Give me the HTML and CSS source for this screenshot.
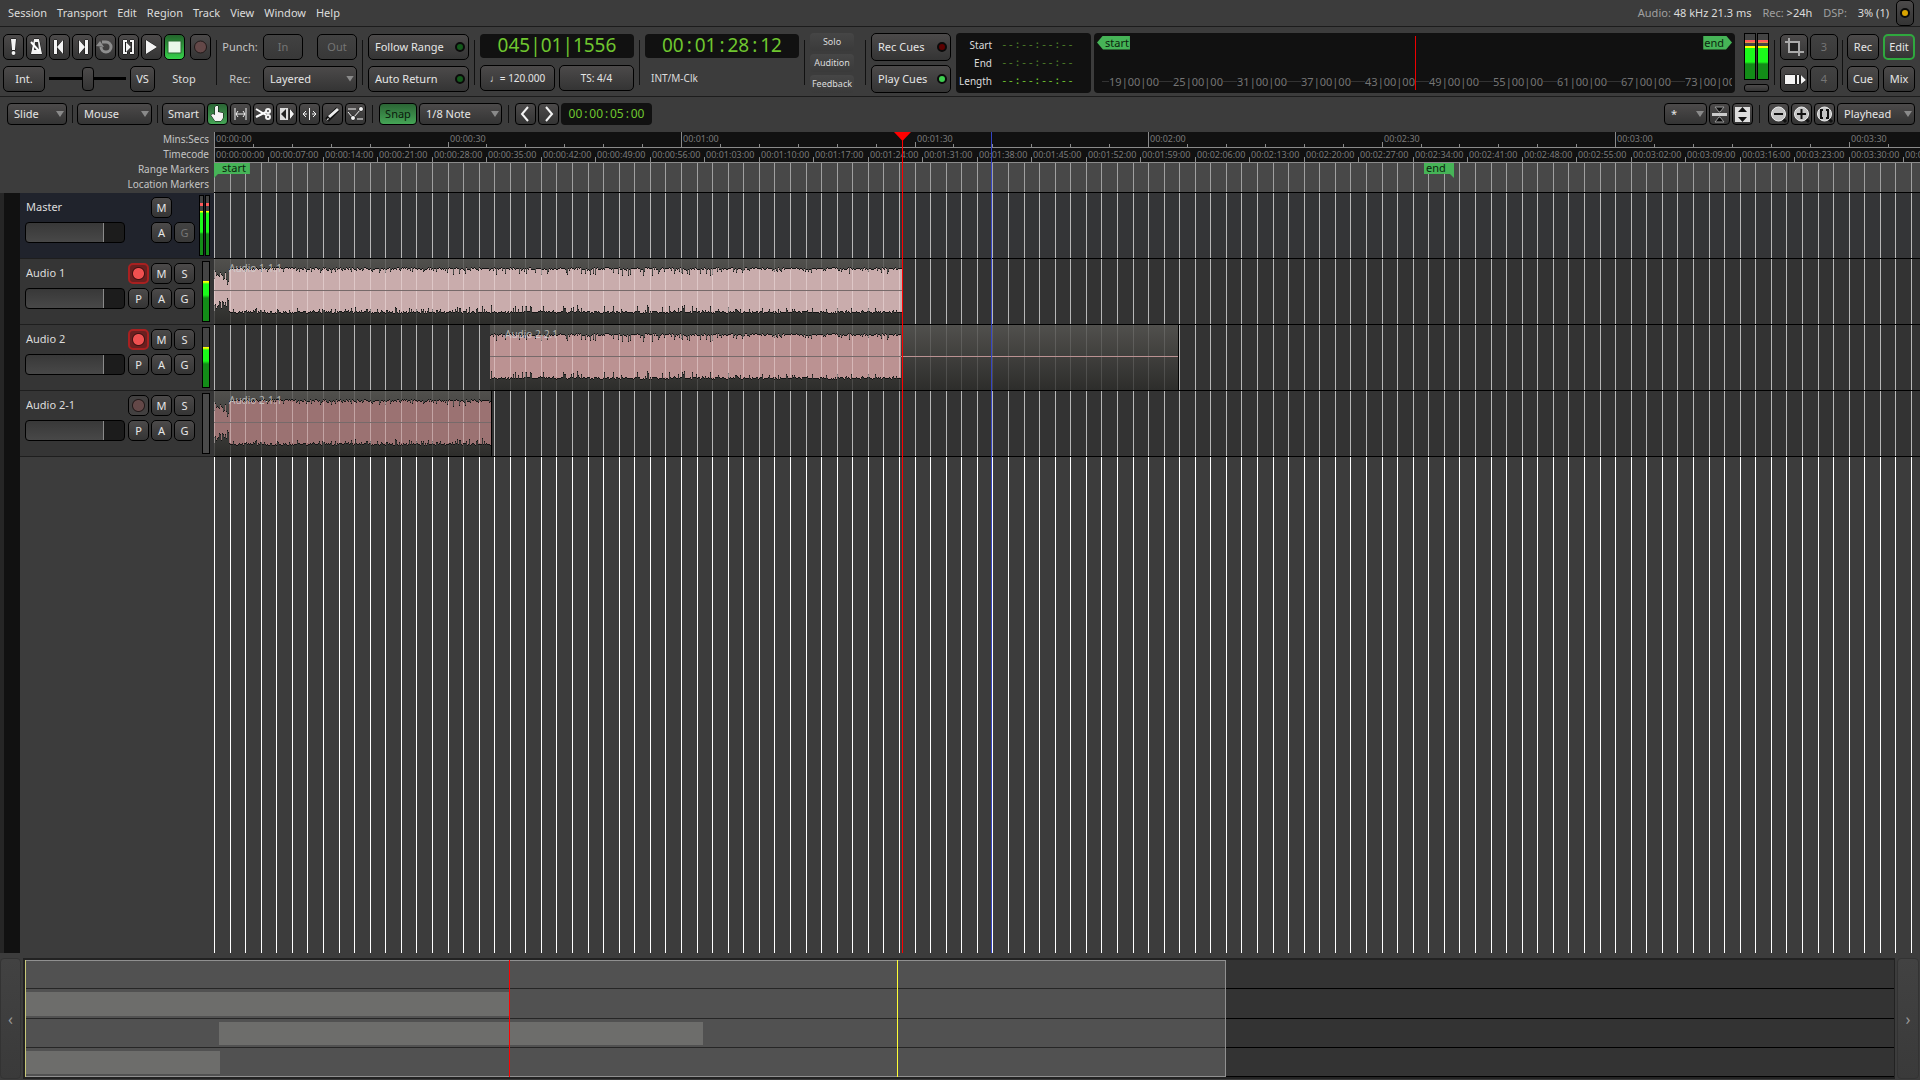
FILE: index.html
```html
<!DOCTYPE html>
<html lang="en">
<head>
<meta charset="utf-8">
<title>Session editor</title>
<link rel="stylesheet" href="styles.css">
</head>
<body>
<header class="menubar">
  <nav class="menus">
    <a href="#session">Session</a><a href="#transport">Transport</a><a href="#edit">Edit</a><a href="#region">Region</a><a href="#track">Track</a><a href="#view">View</a><a href="#window">Window</a><a href="#help">Help</a>
  </nav>
  <div class="status">
    <span><i>Audio:</i> 48 kHz 21.3 ms</span>
    <span><i>Rec:</i> &gt;24h</span>
    <span class="dsp"><i>DSP:</i> 3% (1)</span>
    <button class="btn error-log" aria-label="Log"><b class="led amber"></b></button>
  </div>
</header>

<section class="transport">
  <div class="stack">
    <div class="row">
      <button class="btn ico" aria-label="Panic"><svg viewBox="0 0 21 26"><path d="M8 5h5l-1 11H9z" class="w"/><circle cx="10.500" cy="19" r="2" class="w"/></svg></button>
      <button class="btn ico" aria-label="Metronome"><svg viewBox="0 0 21 26"><path d="M8 5h5l3 15H5z" class="w"/><path d="M9 8l-1 8h5l-1-8z" fill="#333"/><path d="M5 8l8 9" stroke="#fff" stroke-width="2"/></svg></button>
      <button class="btn ico" aria-label="Go to start"><svg viewBox="0 0 21 26"><path d="M5 6h3v14H5zM14 6v14l-6-7z" class="w"/></svg></button>
      <button class="btn ico" aria-label="Go to end"><svg viewBox="0 0 21 26"><path d="M13 6h3v14h-3zM7 6v14l6-7z" class="w"/></svg></button>
      <button class="btn ico" aria-label="Loop"><svg viewBox="0 0 21 26"><path d="M6 13a5 5 0 1 0 5-5H7" fill="none" stroke="#8e8e8e" stroke-width="3"/><path d="M1 12l4-5 4 6z" fill="#8e8e8e"/></svg></button>
      <button class="btn ico" aria-label="Play range"><svg viewBox="0 0 21 26"><path d="M5 6h4v2H7v10h2v2H5zM16 6h-4v2h2v10h-2v2h4zM8 8v10l5-5z" class="w"/></svg></button>
      <button class="btn ico" aria-label="Play"><svg viewBox="0 0 21 26"><path d="M5 6l11 7-11 7z" class="w"/></svg></button>
      <button class="btn ico stop-on" aria-label="Stop"><svg viewBox="0 0 21 26"><path d="M4 7h13v12H4z" fill="#e9f8e9" stroke="#2a6a32"/></svg></button>
      <button class="btn ico rec" aria-label="Record"><svg viewBox="0 0 21 26"><circle cx="10.500" cy="13" r="6" fill="#644848" stroke="#201818"/></svg></button>
    </div>
    <div class="row">
      <button class="btn int">Int.</button>
      <input class="shuttle" type="range" min="0" max="100" value="50" aria-label="Shuttle">
      <button class="btn vs">VS</button>
      <span class="stopped">Stop</span>
    </div>
  </div>
  <hr>
  <div class="punch">
    <span>Punch:</span><div class="row spread"><button class="btn off in">In</button><button class="btn off in">Out</button></div>
    <label for="recmode">Rec:</label>
    <span class="drop"><select id="recmode"><option>Layered</option></select></span>
  </div>
  <hr>
  <div class="stack opts">
    <button class="btn ledbtn">Follow Range<b class="led dim"></b></button>
    <button class="btn ledbtn">Auto Return<b class="led dim"></b></button>
  </div>
  <hr>
  <div class="stack clockbox">
    <div class="clock">045|01|1556</div>
    <div class="row"><button class="btn sm">♩= 120.000</button><button class="btn sm">TS: 4/4</button></div>
  </div>
  <hr>
  <div class="stack clockbox">
    <div class="clock">00<s>:</s>01<s>:</s>28<s>:</s>12</div>
    <div class="sync">INT/M-Clk</div>
  </div>
  <hr>
  <div class="stack tiny">
    <button>Solo</button><button>Audition</button><button>Feedback</button>
  </div>
  <hr>
  <div class="stack cues">
    <button class="btn ledbtn">Rec Cues<b class="led red"></b></button>
    <button class="btn ledbtn">Play Cues<b class="led green"></b></button>
  </div>
  <dl class="range">
    <dt>Start</dt><dd class="faded">--:--:--:--</dd>
    <dt>End</dt><dd class="faded">--:--:--:--</dd>
    <dt>Length</dt><dd>--:--:--:--</dd>
  </dl>
  <div class="minimap">
    <div class="flags"><span class="mflag left">start</span><span class="mflag right">end</span></div>
    <div class="bars"><span>19|00|00</span><span>25|00|00</span><span>31|00|00</span><span>37|00|00</span><span>43|00|00</span><span>49|00|00</span><span>55|00|00</span><span>61|00|00</span><span>67|00|00</span><span>73|00|00</span></div>
    <div class="minihead"></div>
  </div>
  <div class="master-meter">
    <div class="row"><i></i><i></i></div>
    <button class="btn" aria-label="Reset peak"></button>
  </div>
  <hr>
  <div class="quad views">
    <button class="btn" aria-label="Crop"><svg viewBox="0 0 28 26"><path d="M9 8h10v10H9z" fill="#222"/><path d="M5 8h14v14M9 4v14h15" fill="none" stroke="#aaa" stroke-width="2"/></svg></button>
    <button class="btn off">3</button>
    <button class="btn" aria-label="Blocks"><svg viewBox="0 0 28 26"><path d="M5 9h10v9H5zM17 9h2v9h-2zM21 9l5 5-5 4z" class="w"/></svg></button>
    <button class="btn off">4</button>
  </div>
  <hr>
  <div class="quad pages">
    <button class="btn">Rec</button><button class="btn current">Edit</button>
    <button class="btn">Cue</button><button class="btn">Mix</button>
  </div>
</section>

<section class="tools">
  <span class="drop d60"><select aria-label="Edit mode"><option>Slide</option></select></span>
  <hr>
  <span class="drop d75"><select aria-label="Edit point"><option>Mouse</option></select></span>
  <hr>
  <div class="row">
    <button class="btn smart">Smart</button>
    <button class="btn ico tool-on" aria-label="Grab"><svg viewBox="0 0 21 22"><path d="M9 3h2v6l5 1v5l-2 3H8l-4-6 2-1 2 1V4z" class="w"/></svg></button>
    <button class="btn ico" aria-label="Range"><svg viewBox="0 0 21 22"><path d="M5 5v12M16 5v12M6 11h9M8 8l-2 3 2 3M13 8l2 3-2 3" class="l"/></svg></button>
    <button class="btn ico" aria-label="Cut"><svg viewBox="0 0 21 22"><path d="M3 6l10 6M3 14l10-5" stroke="#fff" stroke-width="2"/><circle cx="15" cy="8" r="2" class="l t"/><circle cx="15" cy="14" r="2" class="l t"/></svg></button>
    <button class="btn ico" aria-label="Audition"><svg viewBox="0 0 21 22"><path d="M4 5h8v12H4z" fill="#ddd"/><path d="M5 11l5-5v10z" fill="#222"/><path d="M14 6l4 5-4 5z" class="w"/></svg></button>
    <button class="btn ico" aria-label="Stretch"><svg viewBox="0 0 21 22"><path d="M10.500 5v12M4 11h4M13 11h4M7 8l-3 3 3 3M14 8l3 3-3 3" class="l"/></svg></button>
    <button class="btn ico" aria-label="Draw"><svg viewBox="0 0 21 22"><path d="M5 17L16 6" stroke="#111" stroke-width="5"/><path d="M7 14L16 6" stroke="#eee" stroke-width="3"/><path d="M4 18l2-3 1 1z" class="w"/></svg></button>
    <button class="btn ico" aria-label="Internal edit"><svg viewBox="0 0 21 22"><path d="M3 6h8M3 9l5 6 8-9M12 16h6" class="l"/><circle cx="8" cy="15" r="2" class="w"/><circle cx="16" cy="6" r="2" class="w"/></svg></button>
  </div>
  <hr>
  <div class="row">
    <button class="btn snap">Snap</button>
    <span class="drop d83"><select aria-label="Grid"><option>1/8 Note</option></select></span>
  </div>
  <hr>
  <div class="row">
    <button class="btn ico" aria-label="Nudge back"><svg viewBox="0 0 21 22"><path d="M13 4l-6 7 6 7" class="l t"/></svg></button>
    <button class="btn ico" aria-label="Nudge forward"><svg viewBox="0 0 21 22"><path d="M8 4l6 7-6 7" class="l t"/></svg></button>
    <div class="clock nudge">00<s>:</s>00<s>:</s>05<s>:</s>00</div>
  </div>
  <div class="row tail">
    <span class="drop d43"><select aria-label="Visible tracks"><option>*</option></select></span>
    <button class="btn ico" aria-label="Shrink tracks"><svg viewBox="0 0 21 22"><path d="M3 10h15v3H3z" fill="#ccc"/><path d="M6 4h9l-4 5h-1zM6 19h9l-4-5h-1z" fill="#0a0a0a" stroke="#999"/></svg></button>
    <button class="btn ico" aria-label="Expand tracks"><svg viewBox="0 0 21 22"><path d="M3 4h15v15H3z" fill="#ddd"/><path d="M6 9l4.500-5L15 9zM6 14l4.500 5 4.500-5z" fill="#111"/></svg></button>
  </div>
  <hr>
  <div class="row">
    <button class="btn ico" aria-label="Zoom out"><svg viewBox="0 0 21 22"><path d="M14 15l4 4" stroke="#111" stroke-width="3"/><circle cx="10.500" cy="11" r="7" class="lens"/><path d="M6 11h9" stroke="#111" stroke-width="2"/></svg></button>
    <button class="btn ico" aria-label="Zoom in"><svg viewBox="0 0 21 22"><path d="M14 15l4 4" stroke="#111" stroke-width="3"/><circle cx="10.500" cy="11" r="7" class="lens"/><path d="M6 11h9M10.500 6v10" stroke="#111" stroke-width="2"/></svg></button>
    <button class="btn ico" aria-label="Zoom to session"><svg viewBox="0 0 21 22"><path d="M14 15l4 4" stroke="#111" stroke-width="3"/><circle cx="10.500" cy="11" r="7" class="lens"/><path d="M9 7H7v8h2M12 7h2v8h-2" fill="none" stroke="#111" stroke-width="2"/></svg></button>
    <span class="drop d78"><select aria-label="Zoom focus"><option>Playhead</option></select></span>
  </div>
</section>

<main class="editor">
  <div class="rulernames"><span>Mins:Secs</span><span>Timecode</span><span>Range Markers</span><span>Location Markers</span></div>
  <div class="rulers">
    <div class="ruler" id="minsecs"></div>
    <div class="ruler" id="timecode"></div>
    <div class="markers"><svg class="grid" id="marker-grid"></svg>
      <span class="flag start">start</span><span class="flag end" id="endflag">end</span></div>
  </div>

  <div class="headers">
    <div class="track master">
      <div class="name">Master</div>
      <div class="keys"><button class="btn key c2">M</button></div>
      <div class="fader"></div>
      <div class="keys"><button class="btn key c2">A</button><button class="btn key off">G</button></div>
      <div class="meter"><i></i><i></i></div>
    </div>
    <div class="track">
      <div class="name">Audio 1</div>
      <div class="keys"><button class="btn key armed" aria-label="Record arm"></button><button class="btn key">M</button><button class="btn key">S</button></div>
      <div class="fader"></div>
      <div class="keys"><button class="btn key">P</button><button class="btn key">A</button><button class="btn key">G</button></div>
      <div class="meter"><i></i></div>
    </div>
    <div class="track">
      <div class="name">Audio 2</div>
      <div class="keys"><button class="btn key armed" aria-label="Record arm"></button><button class="btn key">M</button><button class="btn key">S</button></div>
      <div class="fader"></div>
      <div class="keys"><button class="btn key">P</button><button class="btn key">A</button><button class="btn key">G</button></div>
      <div class="meter"><i></i></div>
    </div>
    <div class="track">
      <div class="name">Audio 2-1</div>
      <div class="keys"><button class="btn key unarmed" aria-label="Record arm"></button><button class="btn key">M</button><button class="btn key">S</button></div>
      <div class="fader"></div>
      <div class="keys"><button class="btn key">P</button><button class="btn key">A</button><button class="btn key">G</button></div>
      <div class="meter silent"><i></i></div>
    </div>
  </div>

  <div class="lanes">
    <svg class="grid" id="lane-grid"></svg>
    <div class="lane"></div>
    <div class="lane" id="lane1"></div>
    <div class="lane" id="lane2"></div>
    <div class="lane" id="lane3"></div>
  </div>
  <div class="overlay"><div class="playhead" id="playhead"><svg width="17" height="9"><path d="M0 0h17L8.500 9z" fill="#f00"/></svg></div><div class="mouse" id="mouse"></div></div>
</main>

<footer class="summary">
  <button class="scroll" aria-label="Scroll left">‹</button>
  <div class="overview" id="overview">
    <div></div><div></div><div></div><div></div>
    <b class="window" id="window"></b>
  </div>
  <button class="scroll" aria-label="Scroll right">›</button>
</footer>
<script src="app.js"></script>
</body>
</html>
```
FILE: styles.css
```css
* { box-sizing: border-box; }
body { margin: 0; height: 100vh; display: flex; flex-direction: column; overflow: hidden; background: #3c3c3c; color: #dcdcdc; font: 11px/14px "Noto Sans", sans-serif; }
button, select { font: inherit; color: inherit; padding: 0; margin: 0; }
i { font-style: normal; }
s { text-decoration: none; display: inline-block; width: 11px; text-align: center; }
a { color: inherit; text-decoration: none; }
.row { display: flex; gap: 2px; }
.stack { display: flex; flex-direction: column; gap: 6px; }

.menubar { height: 27px; flex: none; display: flex; justify-content: space-between; align-items: center; border-bottom: 1px solid #1c1c1c; padding: 0 6px 0 8px; }
.menus { display: flex; gap: 10px; }
.status { display: flex; align-items: center; gap: 11px; }
.status i { color: #a0a0a0; }
.dsp i { margin-right: 8px; }
.error-log { width: 18px; height: 22px; margin-left: -4px; }

.btn { border: 1px solid #000; border-radius: 5px; background: linear-gradient(#4c4a4a, #343434); color: #e6e6e6; height: 26px; display: flex; align-items: center; justify-content: center; white-space: nowrap; }
.btn svg { display: block; flex: none; }
.ico { width: 21px; }
.ico svg { width: 21px; }
.w { fill: #f4f4f4; stroke: #111; stroke-width: 1; paint-order: stroke; }
.l { fill: none; stroke: #f4f4f4; stroke-width: 1; }
.l.t { stroke-width: 2; }
.lens { fill: #c4c4c4; stroke: #eee; }
.off { color: #757575; background: linear-gradient(#424242, #383838); }
.led { width: 10px; height: 10px; border-radius: 50%; border: 2px solid #0a0a0a; background: #135a1b; flex: none; }
.led.amber { background: #d9a400; }
.led.red { background: #5c0000; }
.led.green { background: #3fd050; }

hr { border: 0; margin: 0 5px; width: 1px; background: #111; height: 45px; flex: none; }
.transport { flex: none; height: 70px; display: flex; align-items: center; padding: 2px 5px 0 3px; border-bottom: 1px solid #1c1c1c; }
.stop-on { background: linear-gradient(#23642c, #37d24b); }
.rec { margin-left: 3px; }
.int { width: 42px; }
.vs { width: 25px; }
.stopped { width: 54px; text-align: center; align-self: center; }
.shuttle { appearance: none; width: 77px; height: 26px; margin: 0 2px; background: linear-gradient(#000, #000) center / 100% 3px no-repeat; }
.shuttle::-webkit-slider-thumb { appearance: none; width: 12px; height: 24px; border: 1px solid #000; border-radius: 4px; background: linear-gradient(#4c4a4a, #343434); }
.punch { display: grid; grid-template-columns: 36px 94px; gap: 6px 5px; align-items: center; text-align: center; color: #c4c4c4; }
.spread { justify-content: space-between; }
.in { width: 40px; }
.drop { position: relative; display: block; }
.drop select { appearance: none; width: 100%; height: 26px; padding: 0 6px; border: 1px solid #000; border-radius: 5px; background: linear-gradient(#4c4a4a, #343434); color: #e6e6e6; }
.drop::after { content: ""; position: absolute; right: 3px; top: 50%; margin-top: -3px; width: 8px; height: 6px; background: #8a8a8a; clip-path: polygon(0 0, 100% 0, 50% 100%); }
.opts { width: 101px; }
.ledbtn { justify-content: space-between; padding: 0 3px 0 6px; }
.clock { background: #111; color: #6fc62f; border-radius: 4px; height: 24px; font-size: 19px; line-height: 23px; text-align: center; }
.clockbox { width: 154px; gap: 7px; }
.clockbox .row { gap: 4px; }
.sm { flex: 1; font-size: 10px; }
.sync { font-size: 10px; line-height: 26px; padding-left: 6px; }
.tiny { width: 44px; gap: 3px; font-size: 9px; margin-right: 6px; }
.tiny button { border: 0; border-radius: 4px; height: 18px; background: linear-gradient(#464646, #3a3a3a); }
.cues { width: 80px; gap: 4px; margin-right: 5px; }
.cues .btn { height: 28px; }
.range { margin: 0 3px 0 0; width: 135px; height: 60px; background: #111; border-radius: 4px; display: grid; grid-template-columns: 36px 77px; column-gap: 9px; align-content: center; line-height: 18px; font-size: 10px; }
.range dt { text-align: right; }
.range dd { margin: 0; color: #6fc62f; font: 11px/18px "DejaVu Sans Mono", monospace; }
.range .faded { color: #4d7f28; }
.minimap { position: relative; flex: 1; min-width: 0; height: 60px; background: #111; border-radius: 4px; padding: 3px; display: flex; flex-direction: column; justify-content: space-between; }
.flags { display: flex; justify-content: space-between; }
.mflag { background: #46b457; color: #0b240e; line-height: 14px; }
.mflag.left { padding: 0 1px 0 8px; clip-path: polygon(0 50%, 6px 0, 100% 0, 100% 100%, 6px 100%); }
.mflag.right { padding: 0 8px 0 1px; clip-path: polygon(0 0, calc(100% - 6px) 0, 100% 50%, calc(100% - 6px) 100%, 0 100%); }
.bars { display: flex; overflow: hidden; color: #757575; padding-left: 5px; line-height: 16px; }
.bars span { flex: 0 0 64px; display: flex; align-items: center; white-space: nowrap; }
.bars span::before, .bars span::after { content: ""; flex: 1; height: 1px; background: #333; }
.minihead { position: absolute; left: 50%; top: 3px; bottom: 3px; width: 1px; background: #e00; }
.master-meter { width: 25px; margin: 0 0 0 9px; display: flex; flex-direction: column; gap: 4px; }
.master-meter .row { gap: 1px; }
.master-meter i { flex: 1; height: 47px; border: 1px solid #000; background: linear-gradient(#444 0 6px, #ff5a5a 6px 8px, #e89040 8px 9px, #444 9px 12px, #ff0 12px 14px, #1bfa1b 14px 28px, #138c18 30px); }
.master-meter .btn { height: 8px; border-radius: 3px; }
.quad { display: grid; gap: 6px 2px; }
.views { grid-template-columns: 28px 28px; }
.views svg { width: 28px; }
.transport .views + hr { margin: 0 4px; }
.pages { grid-template-columns: 32px 32px; column-gap: 4px; }
.current { border: 2px solid #2fa83e; }

.tools { flex: none; height: 35px; display: flex; align-items: center; padding: 0 5px 1px 7px; }
.tools hr { height: 18px; margin: 0 4px 0 5px; }
.tools .btn, .tools select { height: 22px; border-radius: 4px; }
.tools .row + hr { margin: 0 6px; }
.d60 { width: 60px; } .d75 { width: 75px; } .d83 { width: 83px; } .d43 { width: 43px; } .d78 { width: 78px; }
.smart { width: 43px; }
.snap { width: 38px; }
.tools .snap, .tools .tool-on { background: linear-gradient(#2b6535, #45a556); }
.tools .snap { color: #0a1a0c; }
.nudge { width: 91px; height: 22px; font-size: 12px; line-height: 22px; }
.nudge s { width: 7px; }
.tail { margin-left: auto; }
.tools .tail + hr { margin: 0 8px 0 6px; }

.editor { flex: 1; min-height: 0; position: relative; display: grid; grid-template: 61px 1fr / 214px 1fr; margin-bottom: 5px; }
.rulernames { display: flex; flex-direction: column; text-align: right; padding-right: 5px; font-size: 10px; line-height: 15px; color: #c4c4c4; }
.rulers { min-width: 0; overflow: hidden; display: flex; flex-direction: column; }
.ruler { position: relative; height: 16px; background: #111; border-bottom: 1px solid #8a8a8a; flex: none; }
.ruler + .ruler { height: 15px; }
.ruler span { position: absolute; top: 0; padding-left: 2px; font-size: 9px; line-height: 14px; color: #7a7a7a; white-space: nowrap; }
.ruler b { position: absolute; bottom: 0; width: 1px; background: #8a8a8a; }
.markers { position: relative; flex: 1; background: #484848; border-bottom: 1px solid #000; }
.grid { position: absolute; left: 0; top: 0; width: 100%; height: 100%; }
.flag { position: absolute; top: 0; height: 15px; line-height: 10px; background: #46b457; color: #0b240e; }
.flag.start { left: 0; padding: 0 4px 0 8px; clip-path: polygon(0 0, 100% 0, 100% 11px, 4px 11px, 0 100%); }
.flag.end { width: 30px; padding-left: 2px; clip-path: polygon(0 0, 100% 0, 100% 100%, calc(100% - 4px) 11px, 0 11px); }

.headers { border-left: 4px solid #262626; position: relative; padding-left: 16px; background: linear-gradient(#111, #111) 0 0 / 16px 100% no-repeat; }
.track { height: 66px; background: #353535; border-bottom: 1px solid #1e1e1e; display: grid; grid-template: 21px 21px / 100px 67px 12px; gap: 4px 3px; padding: 4px 3px 0 5px; align-content: start; }
.track.master { background: #20232c; }
.track .name { line-height: 19px; padding-left: 1px; font-size: 11px; }
.keys { display: flex; gap: 2px; }
.key { width: 21px; height: 21px; }
.c2 { margin-left: 23px; }
.fader { grid-column: 1; border: 1px solid #000; border-radius: 4px; background: linear-gradient(90deg, transparent 77px, #8a8a8a 77px 78px, #1c1c1c 78px), linear-gradient(#383838, #484848); }
.meter { grid-column: 3; grid-row: 1 / 3; width: 12px; height: 61px; margin-top: -2px; display: flex; justify-content: flex-end; gap: 1px; }
.meter i { width: 8px; border: 1px solid #000; background: linear-gradient(#444 0 19px, #ff0 19px 20px, #1bfa1b 22px 33px, #138c18 36px); }
.master .meter i { width: 5px; background: linear-gradient(#444 0 7px, #ff5a5a 7px 10px, #444 10px 15px, #ff0 15px 16px, #1bfa1b 17px 36px, #138c18 38px); }
.silent i { background: #4a4a4a; }
.armed { border: 2px solid #a82020; background: radial-gradient(circle, #f05050 0 5px, #401010 6px, #6a2020 7px); }
.unarmed { background: radial-gradient(circle, #644848 0 5px, #221818 6px, #424040 7px); }

.lanes { position: relative; min-width: 0; overflow: hidden; background: #3c3c3c; }
.lane { height: 66px; border-bottom: 1px solid #000; position: relative; }
.region { position: absolute; top: 0; height: 65px; background: linear-gradient(#51504d, #2d2d2b); border-right: 1px solid #000; overflow: hidden; }
.region svg { display: block; width: 100%; height: 65px; }
.region span { position: absolute; left: 15px; top: 3px; font-size: 10px; line-height: 12px; color: rgba(215, 215, 215, .75); white-space: nowrap; }
.overlay { position: absolute; left: 214px; right: 0; top: 0; bottom: 0; pointer-events: none; }
.playhead, .mouse { position: absolute; top: 0; bottom: 0; width: 1px; background: #f00; }
.mouse { background: #3344c4; }
.playhead svg { position: absolute; left: -8px; top: 0; }

.summary { flex: none; height: 122px; display: grid; grid-template-columns: 21px 1fr 22px; gap: 2px; padding: 0 1px 1px 0; }
.scroll { border: 1px solid #333; border-radius: 4px; background: linear-gradient(#424242, #3a3a3a); color: #999; font-size: 16px; }
.overview { position: relative; border: 2px solid #222; border-right-width: 1px; background: #333; display: grid; grid-template-rows: repeat(4, 1fr); overflow: hidden; }
.overview div { position: relative; border-bottom: 1px solid #000; }
.overview u { position: absolute; top: 3px; bottom: 2px; background: #545452; }
.overview b { position: absolute; top: 0; bottom: 0; width: 1px; }
.overview .window { left: 0; border: 1px solid #909090; background: rgba(255, 255, 255, .15); }
```
FILE: app.js
```js
const PX_PER_SEC = 7.784;
const SUMMARY_SECS = 341.6;
const regions = [
  { lane: 1, name: 'Audio 1-1.1', at: 0, end: 88.4, waveEnd: 88.4, color: '#c9acac' },
  { lane: 2, name: 'Audio 2-2.1', at: 35.4, end: 123.9, waveEnd: 88.3, color: '#bb9292' },
  { lane: 3, name: 'Audio 2-1.1', at: 0, end: 35.6, waveEnd: 35.6, color: '#9b7272' }
];
const $ = id => document.getElementById(id);
const x = s => Math.round(s * PX_PER_SEC);
const width = $('minsecs').clientWidth;
const pad = n => String(n).padStart(2, '0');
const stamp = s => '00:' + pad(Math.floor(s / 60)) + ':' + pad(s % 60);

function tick(ruler, s, height, label) {
  ruler.insertAdjacentHTML('beforeend', `<b style="left:${x(s)}px;height:${height}px"></b>` +
    (label ? `<span style="left:${x(s)}px">${label}</span>` : ''));
}
for (let s = 0; x(s) < width; s += 5) {
  tick($('minsecs'), s, s % 60 === 0 ? 15 : s % 30 === 0 ? 5 : 3, s % 30 === 0 ? stamp(s) : '');
}
for (let s = 0; x(s) < width; s += 7) tick($('timecode'), s, s ? 5 : 14, stamp(s) + ':00');

function bars(from, to, top, height, fill) {
  let out = '';
  for (let s = 0; x(s) < to; s += 2) {
    if (x(s) >= from) out += `<rect x="${x(s) - from}" y="${top}" width="1" height="${height}" fill="${fill}"/>`;
  }
  return out;
}
$('marker-grid').innerHTML = bars(0, width, 0, 40, '#a0a0a0');
$('lane-grid').innerHTML = `<rect width="${width}" height="65" fill="#343537"/><rect y="66" width="${width}" height="198" fill="#333"/>` +
  bars(0, width, 0, 264, '#b8b8b8') + bars(0, width, 264, 2000, '#fff');

function noise(n) {
  const v = Math.sin(n * 12.9898) * 43758.5453;
  return v - Math.floor(v);
}
function wave(from, to, extra) {
  const top = [], bottom = [];
  for (let p = 0; p < to - from; p++) {
    const n = p + from;
    const busy = n > 230 && n < 520 ? 7 : 4;
    const dip = side => p < 15 && from === 0
      ? 4 + noise(n + side) * 8 + (p > 12 ? 6 : 0)
      : noise(n + side) * 2 + (noise(n * 3 + side) > .75 ? noise(n * 7 + side) * busy : 0);
    const t = Math.round(9 + dip(1)) - extra, b = Math.round(54 - dip(5)) + extra;
    top.push(`${p},${t} ${p + 1},${t}`);
    bottom.unshift(`${p + 1},${b} ${p},${b}`);
  }
  return top.join(' ') + ' ' + bottom.join(' ');
}
const rows = $('overview').children;
const pct = s => s / SUMMARY_SECS * 100 + '%';
for (const r of regions) {
  const a = x(r.at), e = x(r.end), w = x(r.waveEnd);
  $('lane' + r.lane).innerHTML = `<div class="region" style="left:${a}px;width:${e - a + 1}px"><svg shape-rendering="crispEdges">` +
    bars(a, e, 0, 65, 'rgba(255,255,255,.13)') +
    `<rect y="31" width="${e - a}" height="1" fill="${r.color}"/>` +
    `<polygon points="${wave(a, w, 1)}" fill="#141414"/><polygon points="${wave(a, w, 0)}" fill="${r.color}"/>` +
    bars(a, w, 11, 41, 'rgba(255,240,240,.4)') +
    `<rect y="31" width="${w - a}" height="1" fill="#776a6a"/></svg><span>${r.name}</span></div>`;
  rows[r.lane].innerHTML = `<u style="left:${pct(r.at)};width:${pct(r.end - r.at)}"></u>`;
}
$('endflag').style.left = x(159.3) - 30 + 'px';
$('playhead').style.left = x(88.4) + 'px';
$('mouse').style.left = x(99.8) + 'px';
$('window').style.width = pct(219.5);
$('overview').insertAdjacentHTML('beforeend', `<b style="left:0;background:#c8c878"></b>` +
  `<b style="left:${pct(88.4)};background:#f00"></b><b style="left:${pct(159.3)};background:#ff3"></b>`);
```
